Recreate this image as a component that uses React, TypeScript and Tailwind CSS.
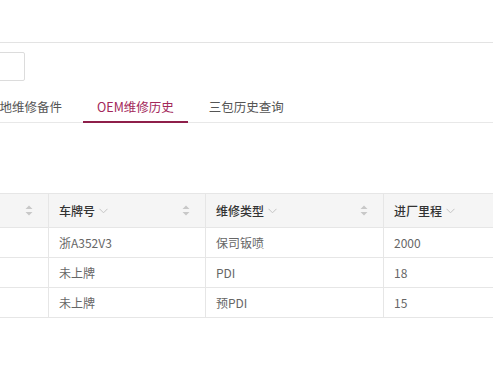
const Chevron = () => (
  <svg width="9" height="6" viewBox="0 0 9 6" className="ml-[4px] mt-[1px]">
    <path d="M0.5 0.8 L4.5 4.8 L8.5 0.8" fill="none" stroke="#c4c4c4" strokeWidth="1" />
  </svg>
);

const SortIcon = () => (
  <svg width="8" height="11" viewBox="0 0 8 11">
    <path d="M4 0.5 L7.5 4 L0.5 4 Z" fill="#c8c8c8" />
    <path d="M4 10.5 L7.5 7 L0.5 7 Z" fill="#c8c8c8" />
  </svg>
);

const HeadCell = ({ label, sortable = true }: { label?: string; sortable?: boolean }) => (
  <div className="flex items-center justify-between border-r border-[#e6e6e6] pl-[10px] pr-[15px]">
    <div className="flex items-center text-[12px] font-medium text-[#333]">
      {label}
      {label && <Chevron />}
    </div>
    {sortable && <SortIcon />}
  </div>
);

const rows = [
  ["", "浙A352V3", "保司钣喷", "2000"],
  ["", "未上牌", "PDI", "18"],
  ["", "未上牌", "预PDI", "15"],
];

export default function App() {
  return (
    <div
      className="w-[493px] h-[370px] bg-white overflow-hidden"
      style={{ fontFamily: '"Noto Sans CJK SC", "Noto Sans", sans-serif' }}
    >
      {/* TOP BAR */}
      <div className="h-[43px] border-b border-[#e3e3e3]" />

      {/* SEARCH INPUT */}
      <div className="mt-[9px] h-[29px] w-[200px] -ml-[175px] border border-[#dcdcdc] rounded-[2px]" />

      {/* TABS */}
      <div className="mt-[12px] border-b border-[#e8e8e8]">
        <div className="flex gap-[7px] -ml-[27px]">
          <div className="px-[14px] pt-[5px] pb-[6px] -mb-px border-b-2 border-transparent text-[12.5px] leading-[17px] text-[#555]">
            本地维修备件
          </div>
          <div className="px-[14px] pt-[5px] pb-[6px] -mb-px border-b-2 border-[#8e1f4a] text-[12.5px] leading-[17px] text-[#a3285a]">
            OEM维修历史
          </div>
          <div className="px-[14px] pt-[5px] pb-[6px] -mb-px border-b-2 border-transparent text-[12.5px] leading-[17px] text-[#555]">
            三包历史查询
          </div>
        </div>
      </div>

      {/* TABLE */}
      <div className="mt-[70px] -ml-[101px] w-[700px] border-t border-[#e6e6e6]">
        <div className="grid grid-cols-[150px_157px_178px_215px] h-[34px] bg-[#f5f5f5] border-b border-[#e6e6e6]">
          <HeadCell />
          <HeadCell label="车牌号" />
          <HeadCell label="维修类型" />
          <HeadCell label="进厂里程" sortable={false} />
        </div>
        {rows.map((r, i) => (
          <div
            key={i}
            className="grid grid-cols-[150px_157px_178px_215px] h-[30px] border-b border-[#e6e6e6]"
          >
            {r.map((c, j) => (
              <div
                key={j}
                className="flex items-center pl-[10px] border-r border-[#e6e6e6] text-[12px] text-[#666]"
              >
                {c}
              </div>
            ))}
          </div>
        ))}
      </div>
    </div>
  );
}
